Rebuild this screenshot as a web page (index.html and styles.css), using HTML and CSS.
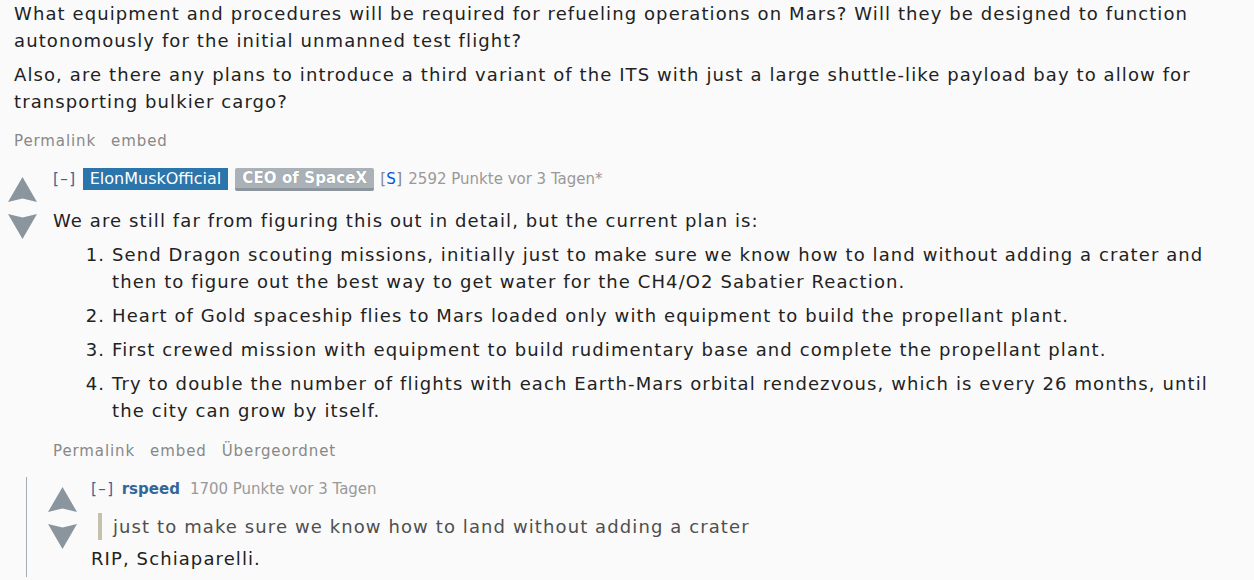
FILE: index.html
```html
<!DOCTYPE html>
<html lang="de">
<head>
<meta charset="UTF-8" />
<title>Kommentare</title>
<link rel="stylesheet" href="styles.css">
</head>
<body>

<div class="post-text md">
  <p>What equipment and procedures will be required for refueling operations on Mars? Will they be designed to function autonomously for the initial unmanned test flight?</p>
  <p>Also, are there any plans to introduce a third variant of the ITS with just a large shuttle-like payload bay to allow for transporting bulkier cargo?</p>
</div>
<ul class="buttons top-buttons">
  <li>Permalink</li>
  <li>embed</li>
</ul>

<div class="comment">
  <div class="midcol">
    <svg class="arrow" viewBox="0 0 29 26"><path d="M14.5 0 L29 25 L14.5 21.5 L0 25 Z"/></svg>
    <svg class="arrow" viewBox="0 0 29 26"><path d="M0 1 L14.5 4.5 L29 1 L14.5 26 Z"/></svg>
  </div>
  <div class="entry">
    <p class="tagline">
      <span class="expand">[&ndash;]</span>
      <span class="author op">ElonMuskOfficial</span>
      <span class="flair">CEO of SpaceX</span>
      <span class="userattrs">[<span class="sub">S</span>]</span>
      <span class="score">2592 Punkte vor 3 Tagen*</span>
    </p>
    <div class="md">
      <p>We are still far from figuring this out in detail, but the current plan is:</p>
      <ol>
        <li>Send Dragon scouting missions, initially just to make sure we know how to land without adding a crater and then to figure out the best way to get water for the CH4/O2 Sabatier Reaction.</li>
        <li>Heart of Gold spaceship flies to Mars loaded only with equipment to build the propellant plant.</li>
        <li>First crewed mission with equipment to build rudimentary base and complete the propellant plant.</li>
        <li>Try to double the number of flights with each Earth-Mars orbital rendezvous, which is every 26 months, until the city can grow by itself.</li>
      </ol>
    </div>
    <ul class="buttons">
      <li>Permalink</li>
      <li>embed</li>
      <li>Übergeordnet</li>
    </ul>

    <div class="child">
      <div class="comment">
        <div class="midcol">
          <svg class="arrow" viewBox="0 0 29 26"><path d="M14.5 0 L29 25 L14.5 21.5 L0 25 Z"/></svg>
          <svg class="arrow" viewBox="0 0 29 26"><path d="M0 1 L14.5 4.5 L29 1 L14.5 26 Z"/></svg>
        </div>
        <div class="entry">
          <p class="tagline">
            <span class="expand">[&ndash;]</span>
            <span class="author">rspeed</span>
            <span class="score">1700 Punkte vor 3 Tagen</span>
          </p>
          <div class="md">
            <blockquote><p>just to make sure we know how to land without adding a crater</p></blockquote>
            <p>RIP, Schiaparelli.</p>
          </div>
        </div>
      </div>
    </div>
  </div>
</div>

</body>
</html>
```

FILE: styles.css
```css
body { margin: 0; background: #fafafa; font-family: "DejaVu Sans", Verdana, sans-serif; color: #222; overflow: hidden; }
.md { font-size: 18px; line-height: 27px; letter-spacing: 1.1px; }
.md p { margin: 0 0 7px; }
.post-text { padding: 0 14px; }
.buttons { list-style: none; margin: 0; padding: 0; display: flex; gap: 15px; font-size: 15px; line-height: 20px; color: #888; letter-spacing: 0.9px; }
.top-buttons { margin: 16px 0 0 14px; }
.comment { display: flex; margin: 16px 0 0 8px; }
.midcol { width: 45px; flex-shrink: 0; display: flex; flex-direction: column; gap: 10px; padding-top: 10px; }
.arrow { width: 29px; height: 26px; fill: #8a959e; }
.entry { flex: 1; }
.tagline { margin: 0; display: flex; align-items: center; gap: 6px; font-size: 15px; line-height: 24px; color: #888; letter-spacing: 0.3px; }
.expand { color: #369; letter-spacing: 1.5px; }
.author { color: #369; font-weight: bold; margin-left: 1px; letter-spacing: 0; }
.author.op { background: #2a75ab; color: #fff; font-weight: normal; font-size: 16px; padding: 0 7px; line-height: 22px; margin-left: 0; }
.flair { background: #aab2b8; color: #fff; font-weight: bold; padding: 0 7px; line-height: 20px; border-bottom: 3px solid #8c959b; border-radius: 2px; text-shadow: 0 0 1px #7c858b; letter-spacing: 0.1px; margin-left: 1px; }
.userattrs { color: #888; }
.sub { color: #0055df; }
.score { color: #999; margin-left: 4px; letter-spacing: 0; }
.tagline .op + .flair + .userattrs + .score { margin-left: 0; }
.entry > .md { margin-top: 16px; }
.md ol { margin: 0; padding: 0 20px 0 59px; }
.md li { margin: 7px 0; }
.entry > .buttons { margin-top: 17px; }
.child { margin: 16px 0 0 -27px; border-left: 1px solid #a5adb4; }
.child .comment { margin: 10px 0 0 21px; }
.child .midcol { width: 43px; }
.child .entry > .md { margin-top: 12px; }
.child .md p { margin-bottom: 5px; }
blockquote { margin: 0 0 5px 7px; padding-left: 11px; border-left: 4px solid #c5c1ad; color: #4f4f4f; }
blockquote p { margin: 0; }
```
